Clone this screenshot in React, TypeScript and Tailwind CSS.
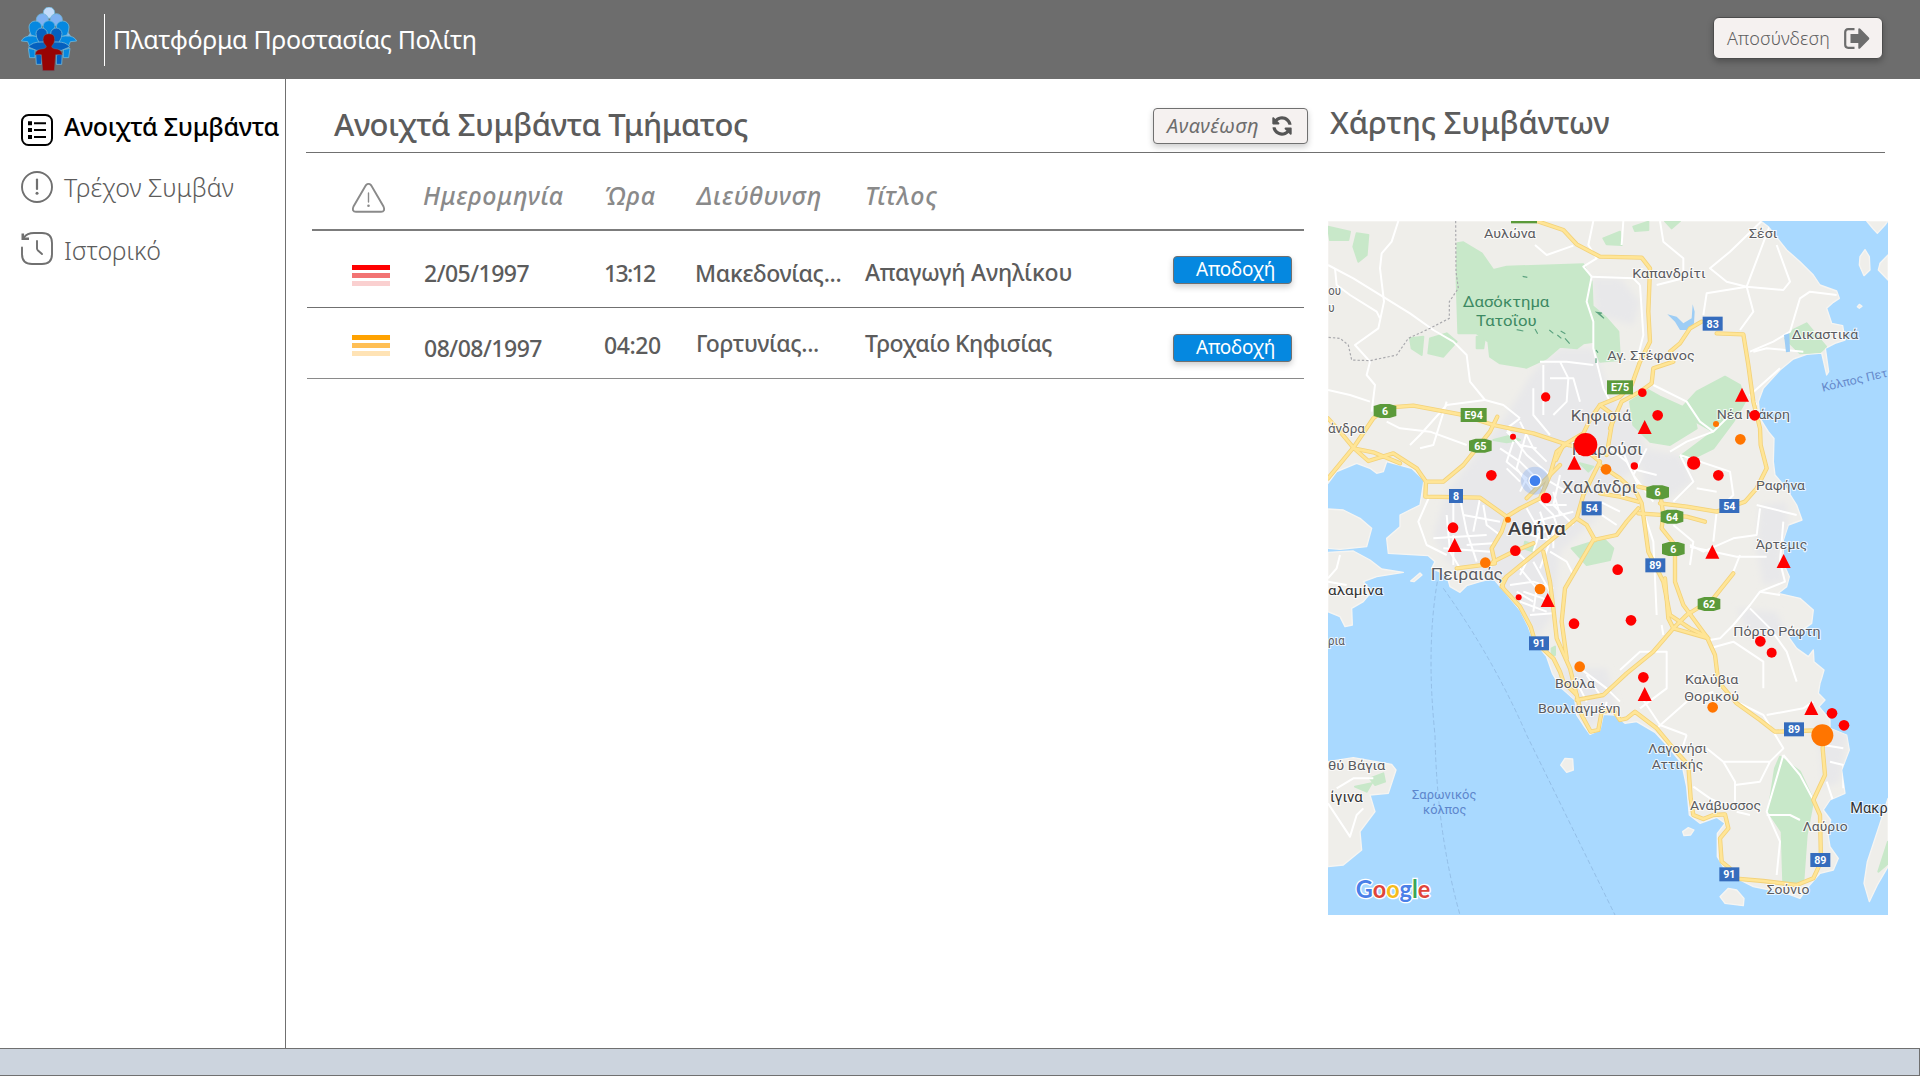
import { FaSyncAlt } from "react-icons/fa";

type P = [number, number];

/* ---------- icons ---------- */
function Logo() {
  return (
    <svg viewBox="0 0 171 195" className="h-[65px] w-[57px]">
      <g stroke="#6fb6d8" strokeWidth="2.500">
        <path d="M30 75l14 12H22zM140 75l8 12h-22z" fill="#8abaf5" />
        <circle cx="84" cy="17" r="17" fill="#c3dcfb" />
        <circle cx="64" cy="38" r="18" fill="#7fb2f3" />
        <circle cx="106" cy="38" r="18" fill="#7fb2f3" />
        <path d="M24 60a19 18 0 0 1 38 0q0 16-14 30l-18-6Q24 72 24 60z" fill="#0588e0" />
        <path d="M106 60a19 18 0 0 1 38 0q0 12-6 24l-20 6Q106 76 106 60z" fill="#0588e0" />
        <path d="M66 58a18 17 0 0 1 36 0q0 14-18 28Q66 72 66 58z" fill="#0588e0" />
        <path d="M1 102Q8 86 34 87l30 3 8 30-44 4-8-20z" fill="#0588e0" />
        <path d="M167 102q-7-16-33-15l-30 3-8 30 44 4 8-20z" fill="#0588e0" />
        <path d="M22 124l20 4v24H26z" fill="#0588e0" />
        <path d="M147 124l-20 4v24h16z" fill="#0588e0" />
        <path d="M45 80a17 17 0 0 1 34 0l-4 26H54Q45 92 45 80z" fill="#0560bf" />
        <path d="M89 80a17 17 0 0 1 34 0q0 12-9 26H93z" fill="#0560bf" />
        <path d="M22 120Q34 104 62 105h46q28-1 38 15l-24 10H46z" fill="#0560bf" />
        <path d="M44 140l18 4v28H46zM124 140l-18 4v28h16z" fill="#0560bf" />
      </g>
      <g fill="#980404" stroke="#5f6f80" strokeWidth="1.500">
        <path d="M66 98q0-18 18-18t17 18q0 10-9 20 0 6 8 7 22 0 24 18h-20l-4 48H65l-4-48H42q2-18 26-18 8-1 8-7-10-10-10-20z" />
      </g>
    </svg>
  );
}

function ListIcon() {
  return (
    <svg viewBox="0 0 32 32" className="size-8" fill="none" stroke="#000" strokeWidth="2">
      <rect x="1" y="1" width="30" height="30" rx="6.500" />
      <path d="M13 9.300h12M13 16h12M13 23h12" />
      <path d="M7 9.300h4M7 16h4M7 23h4" strokeWidth="4" />
    </svg>
  );
}

function CircleAlertIcon() {
  return (
    <svg viewBox="0 0 32 32" className="size-8" fill="none" stroke="#707070" strokeWidth="1.900">
      <circle cx="16" cy="16" r="15" />
      <path d="M16 8.500v9.500" strokeLinecap="round" strokeWidth="2.200" />
      <circle cx="16" cy="22.200" r="1.500" fill="#707070" stroke="none" />
    </svg>
  );
}

function HistoryIcon() {
  return (
    <svg viewBox="0 0 32 33" className="h-[33px] w-8" fill="none" stroke="#707070" strokeWidth="1.900" strokeLinecap="round">
      <path d="M1 15.500V22q0 10 10 10h10q10 0 10-10V11Q31 1 21 1h-8Q6 1 3 5.500" />
      <path d="M1.800 1.500v5.300H8" strokeLinecap="butt" strokeWidth="2.600" />
      <path d="M16 9v7.500q0 1 1 2l4 3.500" />
    </svg>
  );
}

function TriangleAlertIcon() {
  return (
    <svg viewBox="0 0 33 30" className="h-[30px] w-[33px]" fill="none" stroke="#8a8a8a" strokeWidth="1.900">
      <path d="M13.700 2.500 1.500 23.500Q-.5 28.500 4 28.800h25q4.500-.3 2.500-5.300L19.300 2.500q-2.800-3.200-5.600 0z" />
      <path d="M16.500 10v9" strokeLinecap="round" strokeWidth="1.400" />
      <circle cx="16.500" cy="22.800" r="1.300" fill="#8a8a8a" stroke="none" />
    </svg>
  );
}

function LogoutIcon() {
  return (
    <svg viewBox="0 0 26 21" className="h-[21px] w-[26px]">
      <path d="M10.500 1.200H4.200Q1.200 1.200 1.200 4.200v12.600q0 3 3 3h6.300" fill="none" stroke="#6d6d6d" strokeWidth="2.200" />
      <path d="M6.500 6h7.800V.8q.8-1.200 2 0l8.600 8.600q.8 1 0 2l-8.600 8.800q-1.200 1-2 0V15H6.500z" fill="#6d6d6d" />
    </svg>
  );
}

/* ---------- map ---------- */
const LAND = "#efeeea";
const COAST =
  "M24 18H1322L1345 35 1400 105 1440 140 1480 180 1500 210 1550 228 1558 250 1540 262 1520 280 1535 325 1568 332 1575 375 1545 385 1516 400 1526 470 1520 480 1505 414 1460 418 1420 432 1380 465 1330 520 1315 560 1320 610 1345 650 1362 670 1360 740 1365 780 1395 815 1430 870 1446 915 1405 930 1390 975 1390 1045 1408 1085 1400 1115 1375 1135 1440 1150 1480 1185 1475 1225 1440 1250 1405 1265 1430 1300 1465 1325 1480 1305 1482 1340 1512 1365 1505 1390 1500 1405 1495 1435 1515 1455 1497 1475 1530 1515 1530 1540 1580 1560 1588 1605 1565 1665 1575 1735 1530 1755 1510 1785 1532 1815 1525 1865 1530 1895 1555 1930 1540 1965 1500 1975 1465 2015 1440 2050 1400 2035 1300 2015 1260 1995 1210 1955 1192 1925 1192 1855 1215 1825 1190 1807 1140 1825 1108 1800 1100 1715 1085 1645 1040 1590 1005 1552 950 1520 915 1525 885 1500 850 1498 840 1545 810 1558 790 1530 770 1500 765 1455 720 1415 697 1375 680 1325 640 1275 625 1235 600 1185 545 1120 520 1090 480 1100 440 1112 420 1132 390 1115 380 1080 335 1060 345 1040 325 1022 205 1015 200 970 240 935 240 900 300 870 312 795 275 760 200 740 190 770 170 775 150 760 110 745 50 770 24 805z";

const ISLANDS = [
  "M24 882 70 885 120 910 155 940 140 995 60 1003 24 1000z",
  "M24 1012 100 1008 150 1035 185 1062 250 1072 170 1085 130 1100 155 1130 130 1160 95 1180 97 1230 75 1235 60 1205 24 1190z",
  "M24 1640 100 1628 215 1648 228 1665 205 1735 150 1740 165 1790 120 1850 125 1905 70 1950 24 1955z",
  "M272 1098 300 1074 306 1080 282 1100z",
  "M722 1650 735 1630 758 1632 760 1665 740 1672z",
  "M1088 1850 1105 1838 1122 1845 1112 1860 1092 1862z",
  "M1200 2045 1225 2020 1250 2025 1272 2050 1270 2072 1215 2065z",
  "M1704 1750 1680 1825 1642 1940 1632 2005 1648 2060 1672 2010 1704 1955z",
  "M1640 18 1660 42 1672 55 1695 30 1704 18z",
  "M1620 125 1635 104 1648 125 1650 165 1632 182 1618 150z",
  "M1704 120 1680 145 1675 165 1704 195z",
  "M1612 275 1618 268 1626 274 1618 280z",
];

const GREENS = [
  "M412 85 430 82 485 115 520 165 560 155 790 148 815 200 820 330 822 380 790 385 770 400 720 395 680 430 620 458 540 445 510 425 505 380 470 355 415 355 410 200z",
  "M820 275 860 310 895 350 900 435 840 440 825 400z",
  "M930 560 985 525 1020 545 1120 590 1130 640 1050 690 990 680 940 630z",
  "M1075 590 1130 530 1215 485 1260 510 1275 560 1240 620 1180 700 1130 725 1080 725 1180 650z",
  "M270 370 310 365 305 420 275 400zM330 370 380 355 410 380 370 425 325 415z",
  "M470 365 495 365 490 400 470 400z",
  "M24 35 90 50 85 75 30 75zM110 55 145 60 140 120 115 140 100 95z",
  "M850 70 900 50 905 90 860 88z",
  "M940 35 985 20 985 45 945 48zM1035 18 1080 18 1055 40z",
  "M1420 345 1460 325 1518 395 1500 412 1440 415 1395 370z",
  "M755 1000 850 970 880 1000 870 1035 800 1050z",
  "M780 745 820 755 805 770zM615 980 645 990 640 1010 612 1000z",
  "M1365 1660 1380 1625 1440 1670 1480 1755 1460 1860 1450 2000 1390 2010 1385 1850 1345 1790z",
  "M150 1690 190 1675 195 1700 165 1710zM105 1715 155 1705 140 1730z",
  "M1704 1880 1675 1970 1704 1945z",
  "M762 1535 775 1530 775 1560 765 1560z",
  "M520 675 570 662 600 675 560 682z",
  "M695 1300 705 1295 705 1320 695 1320z",
];

const URBAN = [
  "M640 470 720 400 820 400 880 560 960 640 980 740 860 820 840 900 720 1010 700 1200 650 1270 600 1180 540 1110 380 1040 340 960 380 830 470 720 560 600z",
  "M815 190 900 190 960 260 940 330 830 300z",
  "M1320 870 1400 860 1405 920 1380 1040 1400 1100 1330 1110 1310 1000z",
  "M960 700 1080 720 1120 800 1030 860 970 820z",
  "M1250 1180 1370 1190 1400 1260 1290 1270z",
  "M720 1360 860 1360 890 1480 800 1540 730 1410z",
  "M1480 1510 1580 1560 1560 1700 1510 1720 1500 1600z",
];

const HIGHWAYS = [
  "M650 18 730 45 770 88 840 125 965 128 990 160 985 290 990 380 960 440 935 510 900 545 840 570 812 610 790 655 730 690 708 735",
  "M24 790 100 698 160 610 200 578 280 572 420 598 520 630 640 655 745 690",
  "M100 698 145 738 220 715 290 760 318 800 370 800 430 750 470 700 510 650 532 605",
  "M318 800 316 845 480 848 560 905 600 880 660 850 690 780 710 710 735 690",
  "M560 905 545 950 515 1000 525 1045 410 1060",
  "M520 1040 580 1010 640 985",
  "M24 610 60 650 100 698M100 700 160 712 240 745",
  "M1145 320 1110 340 1080 385 1050 410 1060 440 1000 460 995 505 960 530 905 560 870 640",
  "M1190 355 1270 358 1285 450 1300 560 1320 640 1322 690 1340 760 1310 820 1275 860 1190 890 1100 875 1020 865",
  "M840 750 900 790 950 835 965 865 985 1010 1030 1100 1050 1200 1110 1240 1160 1265",
  "M840 570 880 600 860 720M745 690 790 700 840 740 790 840 770 910 700 970 560 1085",
  "M955 815 1020 830 1030 900 1025 940 1065 990 1065 1100 1090 1170 1160 1265 1185 1320 1195 1400 1250 1465 1320 1515 1365 1550 1440 1548 1510 1545",
  "M955 895 1100 905 1155 920",
  "M1035 1090 1045 1210 1060 1240 1165 1270",
  "M1240 1075 1180 1150 1100 1200 1060 1240 1000 1310 920 1375 850 1440 770 1455",
  "M545 1115 560 1085 545 1100 550 1120 600 1175 632 1235 645 1280 700 1330 720 1370 730 1400 770 1440 785 1500 812 1550 835 1545 845 1490",
  "M670 1010 690 1100 700 1180 710 1270 750 1360 770 1440",
  "M955 880 920 920 890 960 820 975 770 1060 735 1120 725 1220 740 1330",
  "M770 910 800 930 825 975",
  "M845 1490 880 1485 900 1515 920 1510 945 1490 1010 1540 1060 1600 1105 1650 1112 1750 1120 1800 1150 1812 1180 1800 1215 1798 1225 1840 1200 1870 1205 1940 1230 1960 1240 1990 1330 1998 1430 2010 1480 1990 1503 1940 1500 1800 1480 1755 1515 1680 1508 1600 1512 1560",
  "M840 835 900 845 955 860M720 750 620 850",
];

const ROADS = [
  "M235 18 215 80 185 115 180 160 192 260 175 340 105 390 150 440 140 480 165 510 155 590",
  "M24 150 100 190 270 295 340 345 400 380 440 420 450 500 495 555 550 570 600 610",
  "M45 160 50 210 90 240 170 290 180 310M24 525 90 540 150 560",
  "M820 18 805 90 830 130 790 155 815 185 800 260 820 320 820 400 830 440 850 520 870 560",
  "M645 90 680 120 760 92M815 185 940 190 960 210",
  "M495 555 380 570 300 660 270 690M380 560 340 690 300 700M200 620 240 640 330 650 440 690",
  "M640 520 640 600 690 660M670 450 670 600M720 440 745 490 740 560 700 600M660 440 740 440 820 450M690 490 760 490 780 560",
  "M910 18 905 90M1020 18 1030 80 1090 130 1090 190 1010 210M960 210 970 360 950 440",
  "M1325 18 1230 110 1170 160 1220 200 1280 215 1390 225 1410 200 1370 90M1350 30 1280 215 1300 290 1260 345M1150 300 1160 235 1280 215",
  "M1290 410 1360 380 1410 350 1440 250 1470 230 1550 240M1300 410 1340 400 1450 410M1380 460 1290 540 1310 570",
  "M1000 510 1100 560 1140 620 1180 650 1230 600M1180 650 1100 680 1050 710",
  "M1080 720 1120 800 1060 860M1080 720 1230 770 1240 840 1190 890 1180 980M1130 820 1190 830",
  "M1310 870 1390 890 1430 900M1320 880 1310 960 1240 970 1150 1010 1110 990M1060 930 1120 980 1110 1050M1110 995 1250 1025 1340 1025M1260 1020 1240 1070",
  "M1390 920 1380 1040 1395 1100 1320 1130 1290 1170 1240 1230 1200 1270 1170 1275M1320 1130 1380 1140",
  "M1290 1180 1350 1240 1400 1310 1430 1400M1170 1300 1240 1280 1330 1340 1330 1420",
  "M960 860 1000 980 1010 1200M1025 1230 1030 1260",
  "M780 1360 860 1420 900 1460M900 1365 960 1310 1040 1310 1040 1420 960 1480",
  "M1010 1540 1100 1460 1180 1430M960 1440 1020 1530 1100 1560M1100 1560 1080 1620",
  "M1260 1465 1330 1500 1390 1600 1350 1640 1210 1640 1160 1600M1210 1640 1245 1700 1245 1760M1350 1640 1320 1700 1245 1710",
  "M1340 1500 1450 1480 1480 1460M1390 1620 1340 1790 1380 1880 1370 1980M1390 1620 1440 1680 1480 1755M1340 1800 1410 1800 1440 1815",
  "M1120 1715 1170 1750 1210 1770M1510 1590 1570 1600M1530 1640 1570 1650 1570 1720M1520 1700 1540 1760",
  "M330 840 295 920 320 990 380 1020M380 900 390 1010 420 1060M420 850 440 950 470 1040M340 970 500 960M370 1000 510 1010M480 850 460 950",
  "M600 610 560 640 620 720 690 780M540 700 600 740 640 780M580 680 560 740 620 790 600 830M620 650 590 760 640 830",
  "M650 850 700 900 720 960M620 880 660 950 640 1010M690 800 740 830 780 830M640 920 760 890M600 950 700 980M660 890 690 980 660 1060M720 780 700 870 760 930",
  "M690 1010 740 1040 760 1080M600 1060 650 1120 640 1190M640 1040 690 1130M570 1110 640 1100 700 1120M600 1160 680 1190M630 1200 700 1195",
  "M870 700 920 740 960 820M900 690 930 760 1010 780M980 700 940 780 1000 860M840 860 900 890M830 890 890 930",
  "M24 1765 90 1865 110 1800 130 1780M50 1720 100 1690 160 1690M24 1100 80 1110M60 1020 50 1060 24 1090",
  "M770 1400 800 1460M800 1380 840 1440M860 1460 840 1540M1250 1790 1290 1800",
  "M560 650 600 690 650 700M600 620 640 700 680 740M560 760 600 800M490 870 500 930 540 960M400 860 400 930M430 900 540 920M400 960 400 1050M440 990 520 985",
  "M660 800 680 870 740 870M700 830 720 900M650 960 720 930M700 1000 700 940M580 1000 620 1040 600 1080M610 1130 670 1150 690 1170M590 1130 640 1160",
];

const CITIES: { t: string; x: number; y: number; w: number; s: number; c?: string; b?: boolean; r?: number }[] = [
  { t: "Αυλώνα", x: 492, y: 68, w: 155, s: 38 },
  { t: "Σέσι", x: 1287, y: 68, w: 85, s: 38 },
  { t: "ου", x: 25, y: 240, w: 38, s: 36 },
  { t: "υ", x: 25, y: 290, w: 19, s: 36 },
  { t: "Δασόκτημα", x: 428, y: 275, w: 260, s: 46, c: "#3d8a63" },
  { t: "Τατοΐου", x: 468, y: 333, w: 182, s: 46, c: "#3d8a63" },
  { t: "Καπανδρίτι", x: 937, y: 188, w: 220, s: 39 },
  { t: "Δικαστικά", x: 1415, y: 373, w: 200, s: 39 },
  { t: "Αγ. Στέφανος", x: 862, y: 435, w: 262, s: 39 },
  { t: "Κόλπος Πετ", x: 1508, y: 530, w: 202, s: 36, c: "#6689cb", r: -13 },
  { t: "Κηφισιά", x: 752, y: 617, w: 182, s: 46 },
  { t: "Νέα Μάκρη", x: 1190, y: 612, w: 220, s: 39 },
  { t: "άνδρα", x: 24, y: 655, w: 111, s: 39 },
  { t: "Μαρούσι", x: 755, y: 720, w: 213, s: 50 },
  { t: "Χαλάνδρι", x: 727, y: 833, w: 225, s: 50 },
  { t: "Ραφήνα", x: 1308, y: 825, w: 147, s: 39 },
  { t: "Αθήνα", x: 563, y: 960, w: 174, s: 55, b: true, c: "#3f4043" },
  { t: "Άρτεμις", x: 1307, y: 1002, w: 155, s: 39 },
  { t: "Πειραιάς", x: 332, y: 1094, w: 217, s: 50 },
  { t: "αλαμίνα", x: 24, y: 1140, w: 165, s: 41, c: "#333" },
  { t: "ρια", x: 24, y: 1291, w: 50, s: 38 },
  { t: "Πόρτο Ράφτη", x: 1240, y: 1264, w: 262, s: 39 },
  { t: "Βούλα", x: 705, y: 1418, w: 120, s: 39 },
  { t: "Βουλιαγμένη", x: 654, y: 1494, w: 248, s: 39 },
  { t: "Καλύβια", x: 1095, y: 1406, w: 160, s: 39 },
  { t: "Θορικού", x: 1093, y: 1457, w: 164, s: 39 },
  { t: "Λαγονήσι", x: 985, y: 1613, w: 176, s: 39 },
  { t: "Αττικής", x: 995, y: 1663, w: 155, s: 39 },
  { t: "θύ Βάγια", x: 24, y: 1664, w: 172, s: 39 },
  { t: "ίγινα", x: 30, y: 1760, w: 98, s: 43, c: "#333" },
  { t: "Σαρωνικός", x: 276, y: 1752, w: 193, s: 37, c: "#5d86cc" },
  { t: "κόλπος", x: 309, y: 1798, w: 130, s: 37, c: "#5d86cc" },
  { t: "Ανάβυσσος", x: 1110, y: 1785, w: 213, s: 39 },
  { t: "Μακρ", x: 1591, y: 1795, w: 112, s: 43, c: "#333" },
  { t: "Λαύριο", x: 1448, y: 1849, w: 135, s: 39 },
  { t: "Σούνιο", x: 1340, y: 2037, w: 128, s: 39 },
];

const BLUE_SHIELDS: [string, number, number][] = [
  ["83", 1178, 326], ["8", 408, 843], ["54", 815, 880], ["54", 1228, 873], ["89", 1006, 1051],
  ["91", 657, 1285], ["89", 1422, 1543], ["89", 1501, 1935], ["91", 1228, 1978],
];
const GREEN_HEX: [string, number, number][] = [
  ["6", 195, 588], ["65", 481, 692], ["6", 1013, 832], ["64", 1056, 905], ["6", 1060, 1002], ["62", 1167, 1167],
];
const GREEN_RECT: [string, number, number][] = [["E75", 900, 517], ["E94", 461, 600], ["", 612, 4]];

const RED_DOTS: [number, number, number][] = [
  [677, 546, 14], [579, 665, 9], [797, 689, 35], [967, 533, 13], [1013, 601, 16], [1304, 601, 16],
  [1121, 744, 20], [943, 753, 11], [1195, 781, 16], [514, 781, 16], [678, 849, 16], [399, 938, 16],
  [586, 1007, 16], [893, 1064, 16], [596, 1147, 9], [762, 1226, 16], [933, 1216, 16], [1321, 1279, 16],
  [1355, 1313, 15], [970, 1387, 16], [1536, 1495, 16], [1572, 1531, 16],
];
const ORANGE_DOTS: [number, number, number][] = [
  [1188, 627, 9], [1261, 673, 16], [858, 763, 16], [564, 914, 9], [496, 1043, 16], [660, 1122, 16],
  [779, 1355, 16], [1178, 1477, 16], [1507, 1561, 33],
];
const TRIANGLES: P[] = [
  [1266, 518], [974, 615], [763, 722], [404, 969], [1177, 989], [1391, 1017], [683, 1134], [974, 1416], [1474, 1458],
];

function IncidentMap() {
  return (
    <svg viewBox="24 18 1680 2082" preserveAspectRatio="none" className="block h-[694px] w-[560px] font-['Roboto',sans-serif]">
      <rect x="24" y="18" width="1680" height="2082" fill="#a9d9ff" />
      <defs>
        <clipPath id="land">
          <path d={COAST} />
          {ISLANDS.map((d) => <path key={d} d={d} />)}
        </clipPath>
        <filter id="soft"><feGaussianBlur stdDeviation="10" /></filter>
      </defs>
      <path d={COAST} fill={LAND} stroke="#f6f5f2" strokeWidth="4" strokeLinejoin="round" />
      {ISLANDS.map((d) => <path key={d} d={d} fill={LAND} stroke="#f6f5f2" strokeWidth="4" strokeLinejoin="round" />)}
      <g clipPath="url(#land)">
        <g fill="#e8e8ea" filter="url(#soft)">{URBAN.map((d) => <path key={d} d={d} />)}</g>
        <g fill="#c8e8c9">{GREENS.map((d) => <path key={d} d={d} strokeLinejoin="round" stroke="#c8e8c9" strokeWidth="6" />)}</g>
        <g fill="none" stroke="#fff" strokeWidth="6" strokeLinejoin="round">{ROADS.map((d) => <path key={d} d={d} />)}</g>
      </g>
      <g fill="#9dcdf5">
        <path d="M1042 298 1070 305 1090 325 1115 310 1118 268 1124 290 1122 325 1105 345 1080 345 1065 320z" />
        <path d="M1392 360 1408 355 1410 410 1398 412z" />
      </g>
      <g fill="none" strokeLinejoin="round" strokeLinecap="round">
        {HIGHWAYS.map((d) => <path key={d} d={d} stroke="#f3d27a" strokeWidth="13" />)}
        {HIGHWAYS.map((d) => <path key={d} d={d} stroke="#ffe596" strokeWidth="8" />)}
      </g>
      <path d="M407 18 408 170 415 220 388 260 388 310 330 340 265 370 230 420 150 437 95 435 85 390 60 370 24 367" fill="none" stroke="#a9a9ad" strokeWidth="3.500" strokeDasharray="7 6" />
      <g fill="none" stroke="#8fb9e2" strokeWidth="2.500" strokeDasharray="14 8">
        <path d="M352 1100 Q318 1300 345 1560 Q350 1850 420 2100" />
        <path d="M370 1120 Q520 1330 620 1560 L885 2100" />
      </g>
      <path d="M608 184l14 3M590 344l20 4M645 342l8 14M688 345l12 10M722 348l14 8M735 370l14 16M712 360l12 10M828 405l6 8M828 430v14M830 292l22 18-14-14 8-2z" stroke="#5ba27f" strokeWidth="3.500" fill="none" />

      {GREEN_RECT.map(([t, x, y]) => (
        <g key={t + x}>
          <rect x={x - 39} y={y - 21} width="78" height="42" fill="#5b9a3a" />
          <text x={x} y={y + 12} textAnchor="middle" fontSize="32" fontWeight="700" fill="#fff">{t}</text>
        </g>
      ))}
      {GREEN_HEX.map(([t, x, y]) => (
        <g key={t + x}>
          <path d={`M${x - 34} ${y - 15}L${x - 14} ${y - 21}H${x + 14}L${x + 34} ${y - 15}V${y + 15}L${x + 14} ${y + 21}H${x - 14}L${x - 34} ${y + 15}z`} fill="#5b9a3a" />
          <text x={x} y={y + 12} textAnchor="middle" fontSize="32" fontWeight="700" fill="#fff">{t}</text>
        </g>
      ))}
      {BLUE_SHIELDS.map(([t, x, y]) => {
        const w = t.length > 1 ? 30 : 21;
        return (
          <g key={t + x}>
            <rect x={x - w} y={y - 21} width={w * 2} height="42" fill="#356cbd" />
            <text x={x} y={y + 12} textAnchor="middle" fontSize="32" fontWeight="700" fill="#fff">{t}</text>
          </g>
        );
      })}
      {CITIES.map((c) => (
        <text key={c.t} x={c.x} y={c.y} fontSize={c.s} textLength={c.w} lengthAdjust="spacingAndGlyphs" fontWeight={c.b ? 500 : 400}
          fill={c.c ?? "#5a5b60"} stroke={c.c && c.c !== "#333" && c.c !== "#3f4043" ? "none" : "#fff"} strokeOpacity=".75" strokeWidth="6" paintOrder="stroke"
          transform={c.r ? `rotate(${c.r} ${c.x} ${c.y})` : undefined}>{c.t}</text>
      ))}
      <text x="107" y="2050" fontSize="72" textLength="224" lengthAdjust="spacingAndGlyphs" fontWeight="700" stroke="#fff" strokeWidth="8" paintOrder="stroke" className="font-['Lato',sans-serif]">
        <tspan fill="#4a80e8">G</tspan><tspan fill="#e0453b">o</tspan><tspan fill="#f5bc1a">o</tspan><tspan fill="#4a80e8">g</tspan><tspan fill="#3aa757">l</tspan><tspan fill="#e0453b">e</tspan>
      </text>

      <circle cx="645" cy="797" r="42" fill="#4285f4" fillOpacity=".22" />
      <circle cx="645" cy="797" r="20" fill="#fff" />
      <circle cx="645" cy="797" r="16" fill="#4080ee" />
      {RED_DOTS.map(([x, y, r]) => <circle key={x + "-" + y} cx={x} cy={y} r={r} fill="#ff0000" />)}
      {ORANGE_DOTS.map(([x, y, r]) => <circle key={x + "-" + y} cx={x} cy={y} r={r} fill="#ff7500" />)}
      {TRIANGLES.map(([x, y]) => <path key={x + "-" + y} d={`M${x} ${y}l21 42h-42z`} fill="#ff0000" />)}
    </svg>
  );
}

/* ---------- table ---------- */
function Severity({ tones }: { tones: string[] }) {
  return (
    <div className="flex w-[38px] flex-col gap-[3px]">
      {tones.map((t) => <span key={t} className="h-[5px] w-full" style={{ background: t }} />)}
    </div>
  );
}

function AcceptButton() {
  return (
    <button className="flex h-7 w-[119px] justify-end rounded-[4px] border border-[#707070] bg-[#0588e0] pr-[16px] text-[19px] leading-[25px] font-normal tracking-[-0.3px] text-white shadow-[0_3px_6px_rgba(0,0,0,0.2)]">
      Αποδοχή
    </button>
  );
}

export default function App() {
  return (
    <div className="flex h-[1076px] w-[1920px] flex-col overflow-hidden bg-white font-['Noto_Sans',sans-serif] text-[#5c5c5c]">
      <header className="flex h-[79px] shrink-0 items-center bg-[#6d6d6d] pl-[21px] pr-[37px]">
        <Logo />
        <div className="ml-[26px] h-[52px] w-px bg-white" />
        <h1 className="ml-2 text-[25px] tracking-[-0.34px] whitespace-nowrap text-white">Πλατφόρμα Προστασίας Πολίτη</h1>
        <button className="mb-[3px] ml-auto flex h-[42px] w-[170px] items-center rounded-[6px] border border-[#4c4c4c] bg-[#f5f1f0] pl-[13px] text-[18px] font-light tracking-[0.14px] text-[#606060] shadow-[0_3px_6px_rgba(0,0,0,0.25)]">
          <span>Αποσύνδεση</span>
          <span className="ml-auto pr-[12px]"><LogoutIcon /></span>
        </button>
      </header>

      <div className="flex min-h-0 flex-1">
        <nav className="flex w-[286px] shrink-0 flex-col border-r border-[#707070] pt-[35px] pl-[21px] text-[25px] whitespace-nowrap">
          <a className="flex h-8 items-center gap-[11px] font-medium tracking-[-0.34px] text-black">
            <ListIcon /><span className="mb-[6px]">Ανοιχτά Συμβάντα</span>
          </a>
          <a className="mt-[25px] flex h-8 items-center gap-[11px] font-light tracking-[-0.06px]">
            <CircleAlertIcon /><span className="mt-[2px]">Τρέχον Συμβάν</span>
          </a>
          <a className="mt-[29px] flex h-[33px] items-center gap-[11px] font-light tracking-[-0.06px]">
            <HistoryIcon /><span className="mt-[4px]">Ιστορικό</span>
          </a>
        </nav>

        <main className="flex min-w-0 flex-1 flex-col pl-5">
          <div className="flex h-[74px] w-[1579px] border-b border-[#707070] pl-[28px] whitespace-nowrap">
            <h2 className="mt-[23px] w-[819px] text-[31px] leading-[44px] font-medium tracking-[-0.42px]">Ανοιχτά Συμβάντα Τμήματος</h2>
            <button className="mt-[29px] flex h-9 w-[155px] items-center justify-between rounded-[4px] border border-[#707070] bg-[#f5f1f0] pr-[15px] pl-[13px] text-[20px] tracking-[0.54px] text-[#6d6d6d] italic shadow-[0_3px_6px_rgba(0,0,0,0.2)]">
              <span>Ανανέωση</span>
              <FaSyncAlt className="size-5 -scale-x-100 text-[#555]" />
            </button>
            <h2 className="mt-[21px] ml-[22px] text-[31px] leading-[44px] font-medium tracking-[-0.22px]">Χάρτης Συμβάντων</h2>
          </div>

          <div className="flex">
            <section className="w-[998px] text-[23px] leading-[32px] font-medium whitespace-nowrap">
              <div className="ml-[6px] grid h-[78px] grid-cols-[111px_181px_92px_169px_1fr] border-b-2 border-[#7c7c7c] pt-[26px] text-[25px] text-[#8a8a8a] italic">
                <span className="pt-[4px] pl-[40px]"><TriangleAlertIcon /></span>
                <span className="tracking-[0.62px]">Ημερομηνία</span>
                <span className="tracking-[0.7px]">Ώρα</span>
                <span className="pl-px tracking-[0.9px]">Διεύθυνση</span>
                <span className="tracking-[0.65px]">Τίτλος</span>
              </div>
              <div className="ml-px grid h-[77px] grid-cols-[45px_72px_180px_91px_170px_308px_1fr] border-b border-[#707070]">
                <span />
                <span className="pt-[34px]"><Severity tones={["#ff0000", "#f27373", "#fad0d0"]} /></span>
                <span className="pt-[26px] tracking-[-0.53px]">2/05/1997</span>
                <span className="pt-[26px] tracking-[-1.7px]">13:12</span>
                <span className="pt-[26px] tracking-[-0.35px]">Μακεδονίας...</span>
                <span className="pt-[25px] tracking-[-0.2px]">Απαγωγή Ανηλίκου</span>
                <span className="pt-[25px]"><AcceptButton /></span>
              </div>
              <div className="ml-px grid h-[71px] grid-cols-[45px_72px_180px_91px_170px_308px_1fr] border-b border-[#8a8a8a]">
                <span />
                <span className="pt-[27px]"><Severity tones={["#ffa200", "#ffbf55", "#ffe3b5"]} /></span>
                <span className="pt-[24px] tracking-[-0.5px]">08/08/1997</span>
                <span className="pt-[21px] tracking-[-0.4px]">04:20</span>
                <span className="pt-[19px] pl-px tracking-[-0.36px]">Γορτυνίας...</span>
                <span className="pt-[19px] tracking-[-0.57px]">Τροχαίο Κηφισίας</span>
                <span className="pt-[26px]"><AcceptButton /></span>
              </div>
            </section>
            <section className="ml-6 pt-[68px]"><IncidentMap /></section>
          </div>
        </main>
      </div>

      <footer className="h-7 shrink-0 border border-l-0 border-[#707070] bg-[#ccd4de]" />
    </div>
  );
}
